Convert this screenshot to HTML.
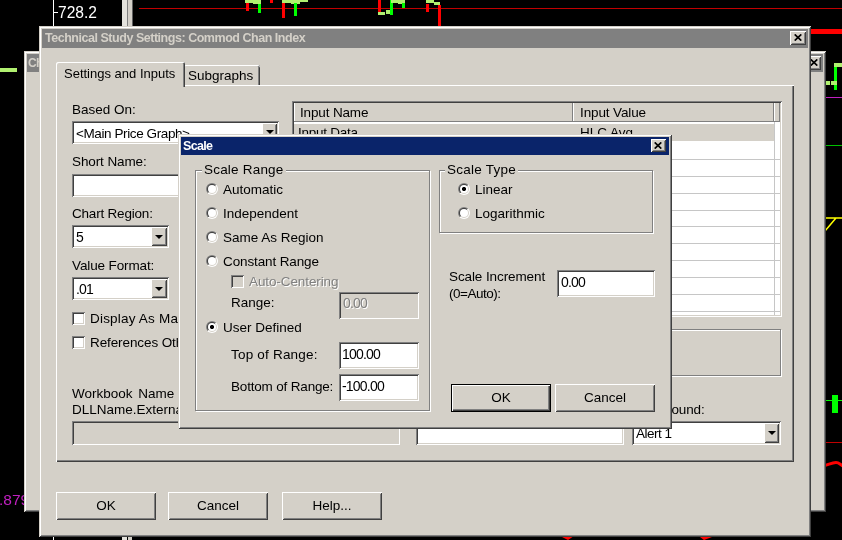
<!DOCTYPE html>
<html>
<head>
<meta charset="utf-8">
<title>Scale</title>
<style>
html,body{margin:0;padding:0;background:#000;}
body{will-change:transform;width:842px;height:540px;position:relative;overflow:hidden;font-family:"Liberation Sans",Arial,sans-serif;font-size:13.5px;color:#000;}
.a{position:absolute;box-sizing:border-box;}
.win{background:#d4d0c8;box-shadow:inset 1px 1px 0 #d4d0c8,inset -1px -1px 0 #404040,inset 2px 2px 0 #fff,inset -2px -2px 0 #808080;}
.tb{background:#808080;color:#d4d0c8;font-weight:bold;font-size:12.5px;white-space:nowrap;overflow:hidden;}
.tba{background:#0a246a;color:#fff;}
.btn{background:#d4d0c8;box-shadow:inset 1px 1px 0 #fff,inset -1px -1px 0 #404040,inset 2px 2px 0 #d4d0c8,inset -2px -2px 0 #808080;text-align:center;white-space:nowrap;}
.def{box-shadow:inset 0 0 0 1px #000,inset 2px 2px 0 #fff,inset -2px -2px 0 #404040,inset -3px -3px 0 #808080;}
.sunk{background:#fff;box-shadow:inset 1px 1px 0 #808080,inset -1px -1px 0 #fff,inset 2px 2px 0 #404040,inset -2px -2px 0 #d4d0c8;white-space:nowrap;overflow:hidden;}
.ro{background:#d4d0c8;}
.lbl{white-space:nowrap;line-height:16px;height:16px;}
.grp{border:1px solid #808080;box-shadow:1px 1px 0 #fff,inset 1px 1px 0 #fff;}
.grp>span{position:absolute;top:-9px;left:5px;background:#d4d0c8;padding:0 2px;line-height:16px;white-space:nowrap;}
.rad{width:12px;height:12px;border-radius:50%;background:linear-gradient(135deg,#808080 50%,#fff 50%);}
.rad:before{content:"";position:absolute;left:1px;top:1px;width:10px;height:10px;border-radius:50%;background:linear-gradient(135deg,#404040 50%,#d4d0c8 50%);}
.rad:after{content:"";position:absolute;left:2px;top:2px;width:8px;height:8px;border-radius:50%;background:#fff;}
.rad.on:after{background:radial-gradient(circle,#000 0,#000 1.7px,#fff 2.4px);}
.chk{width:13px;height:13px;}
.dis{color:#808080;text-shadow:1px 1px 0 #fff;}
.arr{width:0;height:0;border-left:4px solid transparent;border-right:4px solid transparent;border-top:4px solid #000;}
.x{font-size:0;}
.hd{background:#d4d0c8;box-shadow:inset -1px -1px 0 #808080,inset 1px 0 0 #fff;white-space:nowrap;line-height:16px;}
.gl{height:1px;left:2px;width:486px;background:#c6c6c6;}
</style>
</head>
<body>
<!-- chart background pieces -->
<svg class="a" id="chart" style="left:0;top:0" width="842" height="540" viewBox="0 0 842 540" shape-rendering="crispEdges">
  <!-- top-left axis -->
  <rect x="53" y="0" width="1" height="27" fill="#fff"/>
  <rect x="54" y="12" width="4" height="1" fill="#fff"/>
  <text x="58" y="18" font-family="Liberation Sans, sans-serif" font-size="16" fill="#fff" textLength="39" lengthAdjust="spacingAndGlyphs">728.2</text>
  <rect x="122" y="0" width="5" height="27" fill="#e4e2dc"/>
  <rect x="127" y="0" width="1" height="27" fill="#808080"/>
  <rect x="128" y="0" width="4" height="27" fill="#d4d0c8"/>
  <rect x="132" y="0" width="1" height="27" fill="#606060"/>
  <!-- red line -->
  <rect x="139" y="8" width="703" height="1" fill="#c00000"/>
  <!-- candles -->
  <g>
   <rect x="246" y="2" width="3" height="9" fill="#f00"/><rect x="245" y="0" width="8" height="3" fill="#b0f070"/>
   <rect x="253" y="0" width="8" height="4" fill="#b0f070"/><rect x="258" y="4" width="3" height="9" fill="#0f0"/>
   <rect x="270" y="0" width="3" height="3" fill="#f00"/>
   <rect x="282" y="2" width="3" height="16" fill="#f00"/><rect x="282" y="0" width="9" height="3" fill="#b0f070"/>
   <rect x="291" y="0" width="9" height="4" fill="#b0f070"/><rect x="294" y="3" width="3" height="13" fill="#0f0"/>
   <rect x="300" y="0" width="8" height="2" fill="#b0f070"/>
   <rect x="378" y="0" width="3" height="13" fill="#f00"/><rect x="378" y="12" width="7" height="3" fill="#b0f070"/>
   <rect x="386" y="10" width="7" height="4" fill="#b0f070"/><rect x="390" y="0" width="3" height="15" fill="#0f0"/>
   <rect x="391" y="0" width="7" height="3" fill="#b0f070"/>
   <rect x="398" y="0" width="7" height="4" fill="#b0f070"/><rect x="402" y="3" width="3" height="5" fill="#0f0"/>
   <rect x="426" y="4" width="3" height="8" fill="#f00"/><rect x="426" y="0" width="8" height="3" fill="#b0f070"/>
   <rect x="434" y="2" width="6" height="3" fill="#b0f070"/><rect x="438" y="5" width="3" height="22" fill="#f00"/>
  </g>
  <!-- left -->
  <rect x="0" y="68" width="17" height="4" fill="#b0f070"/>
  <text x="-1" y="505" font-family="Liberation Sans, sans-serif" font-size="15.5" fill="#c020c0">.879</text>
  <!-- right side -->
  <rect x="810" y="29" width="32" height="5" fill="#f00"/>
  <rect x="834" y="63" width="3" height="27" fill="#0f0"/><rect x="834" y="63" width="8" height="4" fill="#b0f070"/>
  <rect x="826" y="81" width="4" height="4" fill="#b0f070"/><rect x="831" y="81" width="6" height="4" fill="#b0f070"/>
  <rect x="825" y="97" width="17" height="1" fill="#c020c0"/>
  <rect x="825" y="145" width="17" height="1" fill="#00c000"/>
  <g shape-rendering="auto"><path d="M826 218H842M836 218L825 231" stroke="#ff0" stroke-width="1.5" fill="none"/>
  <path d="M825 465.5C829 464.5 832 462.5 836 462.5C839 462.5 840 464.5 843 466" stroke="#f00" stroke-width="3" fill="none"/></g>
  <rect x="832" y="395" width="6" height="18" fill="#0f0"/><rect x="826" y="400" width="16" height="1" fill="#0f0"/>
  <rect x="825" y="442" width="17" height="1" fill="#c00000"/>
  <!-- bottom strip -->
  <rect x="53" y="536" width="1" height="4" fill="#fff"/>
  <text x="58" y="552" font-family="Liberation Sans, sans-serif" font-size="16" fill="#fff" textLength="39" lengthAdjust="spacingAndGlyphs">727.0</text>
  <rect x="122" y="536" width="5" height="4" fill="#e4e2dc"/><rect x="128" y="536" width="4" height="4" fill="#d4d0c8"/>
  <g shape-rendering="auto"><path d="M560 536l14 0l-6 4zM700 537l12 0l-8 3z" fill="#f00"/></g>
</svg>

<!-- back dialog -->
<div class="a win" id="back" style="left:24px;top:51px;width:802px;height:461px;">
  <div class="a tb" style="left:3px;top:3px;width:796px;height:18px;line-height:18px;padding-left:1px;font-size:12px;letter-spacing:-0.6px;">Chart Studies</div>
  <div class="a btn x" style="left:784px;top:5px;width:13px;height:14px;"><svg class="a" style="left:2px;top:3px" width="8" height="7" viewBox="0 0 8 7"><path d="M0.7 0.4L7.3 6.6M7.3 0.4L0.7 6.6" stroke="#000" stroke-width="1.7" fill="none"/></svg></div>
</div>

<!-- main dialog -->
<div class="a win" id="main" style="left:39px;top:26px;width:772px;height:511px;">
  <div class="a tb" style="left:3px;top:3px;width:766px;height:19px;line-height:19px;padding-left:3px;letter-spacing:-0.47px;">Technical Study Settings: Commod Chan Index</div>
</div>


<!-- main dialog contents (page coords) -->
<div class="a btn x" style="left:790px;top:31px;width:16px;height:14px;"><svg class="a" style="left:4px;top:3px" width="8" height="7" viewBox="0 0 8 7"><path d="M0.7 0.4L7.3 6.6M7.3 0.4L0.7 6.6" stroke="#000" stroke-width="1.7" fill="none"/></svg></div>

<!-- tab pane -->
<div class="a" style="left:56px;top:85px;width:738px;height:377px;box-shadow:inset 1px 1px 0 #fff,inset -1px -1px 0 #404040,inset -2px -2px 0 #808080;"></div>
<!-- inactive tab -->
<div class="a" style="left:184px;top:65px;width:76px;height:20px;border-radius:2px 2px 0 0;box-shadow:inset 0 1px 0 #fff,inset -1px 0 0 #404040,inset -2px 0 0 #808080;"></div>
<div class="a lbl" style="left:188px;top:68px;">Subgraphs</div>
<!-- active tab -->
<div class="a" style="left:56px;top:62px;width:129px;height:25px;background:#d4d0c8;border-radius:2px 2px 0 0;box-shadow:inset 1px 1px 0 #fff,inset -1px 0 0 #404040,inset -2px 0 0 #808080;"></div>
<div class="a lbl" style="left:64px;top:66px;font-size:13px;">Settings and Inputs</div>

<div class="a lbl" style="left:72px;top:102px;">Based On:</div>
<div class="a sunk" style="left:72px;top:121px;width:207px;height:23px;padding:5px 0 0 4px;line-height:16px;letter-spacing:-0.4px;">&lt;Main Price Graph&gt;</div>
<div class="a btn" style="left:262px;top:123px;width:15px;height:19px;"><div class="a arr" style="left:4px;top:7px;"></div></div>

<div class="a lbl" style="left:72px;top:154px;letter-spacing:-0.1px;">Short Name:</div>
<div class="a sunk" style="left:72px;top:174px;width:207px;height:23px;"></div>

<div class="a lbl" style="left:72px;top:206px;letter-spacing:-0.2px;">Chart Region:</div>
<div class="a sunk" style="left:72px;top:225px;width:97px;height:23px;padding:4px 0 0 4px;line-height:16px;font-size:14px;letter-spacing:-0.8px;">5</div>
<div class="a btn" style="left:151px;top:227px;width:16px;height:19px;"><div class="a arr" style="left:4px;top:8px;"></div></div>

<div class="a lbl" style="left:72px;top:258px;letter-spacing:-0.12px;">Value Format:</div>
<div class="a sunk" style="left:72px;top:277px;width:97px;height:23px;padding:4px 0 0 4px;line-height:16px;font-size:14px;letter-spacing:-0.8px;">.01</div>
<div class="a btn" style="left:151px;top:279px;width:16px;height:19px;"><div class="a arr" style="left:4px;top:8px;"></div></div>

<div class="a sunk chk" style="left:72px;top:312px;"></div>
<div class="a lbl" style="left:90px;top:311px;letter-spacing:0.2px;">Display As Main Price Graph</div>
<div class="a sunk chk" style="left:72px;top:336px;"></div>
<div class="a lbl" style="left:90px;top:335px;letter-spacing:-0.1px;">References Other Sheets</div>

<div class="a lbl" style="left:72px;top:386px;word-spacing:2px;">Workbook Name</div>
<div class="a lbl" style="left:72px;top:402px;">DLLName.ExternalFunction</div>
<div class="a sunk ro" style="left:72px;top:421px;width:328px;height:24px;"></div>
<div class="a sunk" style="left:416px;top:421px;width:208px;height:24px;"></div>

<div class="a lbl" style="left:632px;top:402px;letter-spacing:-0.15px;">Alert Sound:</div>
<div class="a sunk" style="left:632px;top:421px;width:149px;height:24px;padding:5px 0 0 4px;line-height:16px;letter-spacing:-0.5px;">Alert 1</div>
<div class="a btn" style="left:764px;top:423px;width:15px;height:20px;"><div class="a arr" style="left:4px;top:8px;"></div></div>

<!-- list view -->
<div class="a sunk" id="list" style="left:292px;top:101px;width:490px;height:216px;">
  <div class="a" style="left:2px;top:23px;width:480px;height:17px;background:#d4d0c8;"></div>
  <div class="a hd" style="left:2px;top:2px;width:279px;height:19px;padding:2px 0 0 6px;letter-spacing:-0.15px;">Input Name</div>
  <div class="a hd" style="left:281px;top:2px;width:201px;height:19px;padding:2px 0 0 7px;letter-spacing:-0.12px;">Input Value</div>
  <div class="a hd" style="left:482px;top:2px;width:6px;height:19px;"></div>
  <div class="a lbl" style="left:6px;top:24px;letter-spacing:-0.25px;">Input Data</div>
  <div class="a lbl" style="left:288px;top:24px;">HLC Avg</div>
  <div class="a gl" style="top:58px;"></div><div class="a gl" style="top:75px;"></div><div class="a gl" style="top:92px;"></div><div class="a gl" style="top:109px;"></div><div class="a gl" style="top:125px;"></div><div class="a gl" style="top:142px;"></div><div class="a gl" style="top:159px;"></div><div class="a gl" style="top:176px;"></div><div class="a gl" style="top:193px;"></div><div class="a gl" style="top:210px;"></div>
  <div class="a" style="left:482px;top:21px;width:1px;height:193px;background:#c6c6c6;"></div>
</div>

<!-- empty group below list -->
<div class="a grp" style="left:640px;top:329px;width:141px;height:47px;"></div>

<!-- bottom buttons -->
<div class="a btn" style="left:56px;top:492px;width:100px;height:28px;line-height:27px;">OK</div>
<div class="a btn" style="left:168px;top:492px;width:100px;height:28px;line-height:27px;">Cancel</div>
<div class="a btn" style="left:282px;top:492px;width:100px;height:28px;line-height:27px;">Help...</div>

<!-- scale dialog -->
<div class="a win" id="scale" style="left:178px;top:134px;width:494px;height:295px;">
  <div class="a tb tba" style="left:3px;top:3px;width:488px;height:18px;line-height:18px;padding-left:2px;letter-spacing:-0.7px;">Scale</div>
</div>

<!-- scale dialog contents (page coords) -->
<div class="a btn x" style="left:651px;top:139px;width:15px;height:13px;"><svg class="a" style="left:3px;top:3px" width="8" height="7" viewBox="0 0 8 7"><path d="M0.7 0.4L7.3 6.6M7.3 0.4L0.7 6.6" stroke="#000" stroke-width="1.7" fill="none"/></svg></div>

<div class="a grp" style="left:195px;top:170px;width:235px;height:241px;"><span style="letter-spacing:0.2px;left:6px">Scale Range</span></div>
<div class="a rad" style="left:206px;top:183px;"></div><div class="a lbl" style="left:223px;top:182px;">Automatic</div>
<div class="a rad" style="left:206px;top:207px;"></div><div class="a lbl" style="left:223px;top:206px;">Independent</div>
<div class="a rad" style="left:206px;top:231px;"></div><div class="a lbl" style="left:223px;top:230px;">Same As Region</div>
<div class="a rad" style="left:206px;top:255px;"></div><div class="a lbl" style="left:223px;top:254px;letter-spacing:-0.12px;">Constant Range</div>
<div class="a sunk chk ro" style="left:231px;top:275px;"></div><div class="a lbl dis" style="left:249px;top:274px;letter-spacing:-0.1px;">Auto-Centering</div>
<div class="a lbl" style="left:231px;top:295px;">Range:</div>
<div class="a sunk ro dis" style="left:339px;top:292px;width:80px;height:27px;padding:3px 0 0 4px;line-height:16px;font-size:14px;letter-spacing:-0.8px;">0.00</div>
<div class="a rad on" style="left:206px;top:321px;"></div><div class="a lbl" style="left:223px;top:320px;">User Defined</div>
<div class="a lbl" style="left:231px;top:347px;letter-spacing:0.2px;">Top of Range:</div>
<div class="a sunk" style="left:339px;top:342px;width:80px;height:27px;padding:4px 0 0 3px;line-height:16px;font-size:14px;letter-spacing:-0.8px;">100.00</div>
<div class="a lbl" style="left:231px;top:379px;letter-spacing:-0.18px;">Bottom of Range:</div>
<div class="a sunk" style="left:339px;top:374px;width:80px;height:27px;padding:4px 0 0 3px;line-height:16px;font-size:14px;letter-spacing:-0.8px;">-100.00</div>

<div class="a grp" style="left:439px;top:170px;width:214px;height:63px;"><span style="letter-spacing:0.25px">Scale Type</span></div>
<div class="a rad on" style="left:458px;top:183px;"></div><div class="a lbl" style="left:475px;top:182px;">Linear</div>
<div class="a rad" style="left:458px;top:207px;"></div><div class="a lbl" style="left:475px;top:206px;">Logarithmic</div>

<div class="a lbl" style="left:449px;top:269px;letter-spacing:-0.1px;">Scale Increment</div>
<div class="a lbl" style="left:449px;top:286px;letter-spacing:-0.5px;">(0=Auto):</div>
<div class="a sunk" style="left:557px;top:270px;width:98px;height:27px;padding:4px 0 0 4px;line-height:16px;font-size:14px;letter-spacing:-0.8px;">0.00</div>

<div class="a btn def" style="left:451px;top:384px;width:100px;height:28px;line-height:27px;">OK</div>
<div class="a btn" style="left:555px;top:384px;width:100px;height:28px;line-height:27px;">Cancel</div>
</body>
</html>
